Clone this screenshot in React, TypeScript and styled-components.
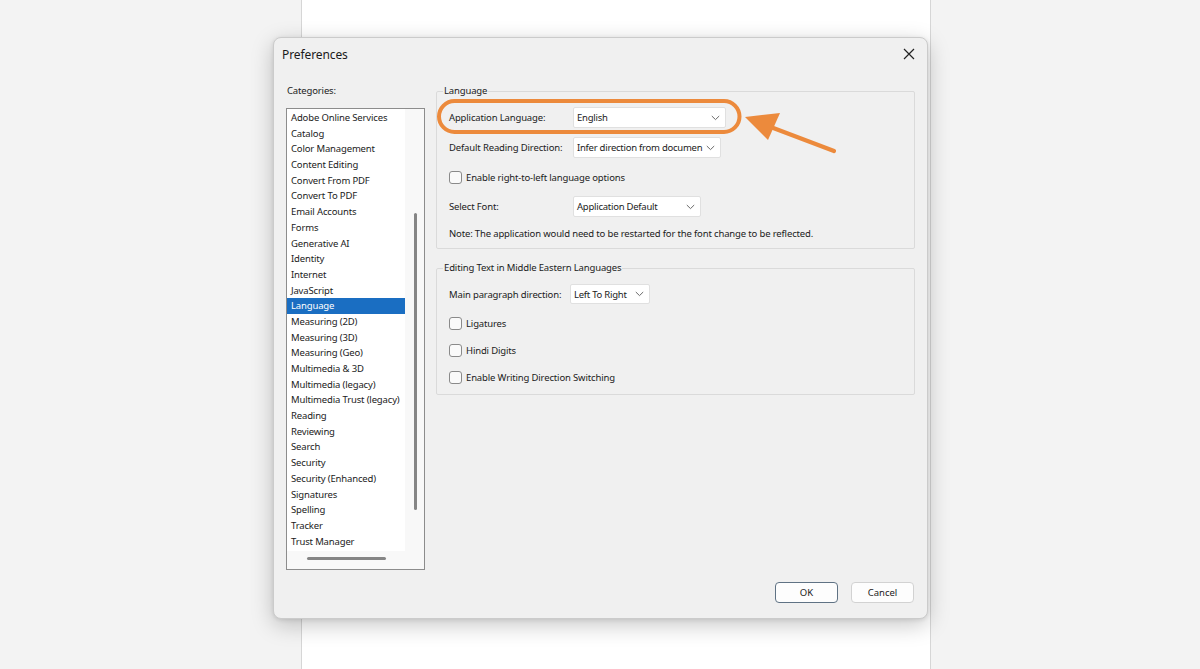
import styled, { createGlobalStyle } from 'styled-components'

const GlobalStyle = createGlobalStyle`
  html, body {
    margin: 0;
    padding: 0;
    background: #f3f3f3;
    font-family: "Noto Sans", "Liberation Sans", sans-serif;
    color: #1b1b1b;
  }
`

const Screen = styled.div`
  position: relative;
  width: 1200px;
  height: 669px;
  overflow: hidden;
  background: #f3f3f3;
`

const PageSheet = styled.div`
  margin-left: 301px;
  width: 628px;
  height: 100%;
  background: #ffffff;
  border-left: 1px solid #d6d6d6;
  border-right: 1px solid #d6d6d6;
`

const Dialog = styled.div`
  position: absolute;
  top: 37px;
  left: 273px;
  width: 655px;
  height: 582px;
  box-sizing: border-box;
  background: #f0f0f0;
  border: 1px solid #cbcbcb;
  border-radius: 8px;
  box-shadow: 0 6px 22px rgba(0, 0, 0, 0.22), 0 1px 4px rgba(0, 0, 0, 0.1);
  display: flex;
  flex-direction: column;
`

const TitleBar = styled.div`
  height: 32px;
  display: flex;
  align-items: center;
  justify-content: space-between;
  padding: 0 8px 0 8px;
`

const Title = styled.span`
  font-size: 12px;
  letter-spacing: -0.1px;
`

const CloseButton = styled.button`
  width: 20px;
  height: 20px;
  padding: 0;
  border: none;
  background: transparent;
  display: flex;
  align-items: center;
  justify-content: center;
`

const Body = styled.div`
  display: flex;
  gap: 11px;
  padding: 14px 12px 0 12px;
  flex: 1;
`

const LeftColumn = styled.div`
  width: 139px;
  display: flex;
  flex-direction: column;
`

const SmallLabel = styled.div`
  font-size: 9.5px;
  letter-spacing: -0.15px;
  line-height: 14px;
  height: 14px;
  margin-bottom: 10px;
  padding-left: 1px;
`

const ListBox = styled.div`
  height: 462px;
  box-sizing: border-box;
  border: 1px solid #8c8c8c;
  display: grid;
  grid-template-columns: 1fr 19px;
  grid-template-rows: 1fr 18px;
  background: #f8f8f8;
`

const Items = styled.div`
  background: #ffffff;
  padding-top: 1px;
  overflow: hidden;
`

const Item = styled.div<{ $selected?: boolean }>`
  font-size: 9.5px;
  letter-spacing: -0.15px;
  line-height: 15.7px;
  height: 15.7px;
  padding-left: 4px;
  white-space: nowrap;
  background: ${(p) => (p.$selected ? '#1a6ec2' : 'transparent')};
  color: ${(p) => (p.$selected ? '#ffffff' : '#1b1b1b')};
`

const VTrack = styled.div`
  background: #f8f8f8;
  display: flex;
  justify-content: center;
`

const VThumb = styled.div`
  width: 3px;
  height: 297px;
  margin-top: 104px;
  margin-left: 1px;
  border-radius: 2px;
  background: #858585;
`

const HTrack = styled.div`
  background: #f8f8f8;
  display: flex;
  align-items: center;
`

const HThumb = styled.div`
  width: 79px;
  height: 3px;
  margin-left: 20px;
  margin-top: -3px;
  border-radius: 2px;
  background: #858585;
`

const RightColumn = styled.div`
  flex: 1;
  display: flex;
  flex-direction: column;
`

const Group = styled.fieldset<{ $gap: number; $bottom: number }>`
  margin: 0;
  padding: 9px 0 ${(p) => p.$bottom}px 12px;
  border: 1px solid #dadada;
  border-radius: 2px;
  display: flex;
  flex-direction: column;
  gap: ${(p) => p.$gap}px;
  & + & {
    margin-top: 12px;
  }
`

const Legend = styled.legend`
  font-size: 9.5px;
  letter-spacing: -0.15px;
  line-height: 14px;
  padding: 0 1px;
  margin-left: -6px;
`

const Row = styled.div<{ $h?: number; $after?: number }>`
  display: flex;
  align-items: center;
  height: ${(p) => p.$h ?? 20}px;
  margin-bottom: ${(p) => p.$after ?? 0}px;
  font-size: 9.5px;
  letter-spacing: -0.15px;
  white-space: nowrap;
`

const FieldLabel = styled.span<{ $w: number }>`
  width: ${(p) => p.$w}px;
  flex-shrink: 0;
`

const Select = styled.div<{ $w: number }>`
  width: ${(p) => p.$w}px;
  height: 100%;
  box-sizing: border-box;
  background: #ffffff;
  border: 1px solid #e0e0e0;
  border-radius: 2px;
  display: flex;
  align-items: center;
  justify-content: space-between;
  gap: 3px;
  padding: 0 5px 0 3px;
`

const SelectText = styled.span`
  white-space: nowrap;
  letter-spacing: -0.25px;
`

const Check = styled.span`
  width: 13px;
  height: 13px;
  box-sizing: border-box;
  border: 1px solid #8a8a8a;
  border-radius: 3px;
  background: #fafafa;
  margin-right: 4px;
  flex-shrink: 0;
`

const Note = styled.div`
  font-size: 9.5px;
  letter-spacing: -0.15px;
  line-height: 16px;
  height: 16px;
  white-space: nowrap;
`

const Footer = styled.div`
  display: flex;
  justify-content: flex-end;
  gap: 13px;
  padding: 0 13px 15px 0;
`

const Button = styled.button<{ $primary?: boolean }>`
  width: 63px;
  height: 21px;
  box-sizing: border-box;
  font-family: inherit;
  font-size: 9.5px;
  color: #1b1b1b;
  background: #fdfdfd;
  border: 1px solid ${(p) => (p.$primary ? '#5f7284' : '#d2d2d2')};
  border-radius: 4px;
  padding: 0;
`

const Annotation = styled.svg`
  position: absolute;
  left: 0;
  top: 0;
  pointer-events: none;
`

const categories = [
  'Adobe Online Services',
  'Catalog',
  'Color Management',
  'Content Editing',
  'Convert From PDF',
  'Convert To PDF',
  'Email Accounts',
  'Forms',
  'Generative AI',
  'Identity',
  'Internet',
  'JavaScript',
  'Language',
  'Measuring (2D)',
  'Measuring (3D)',
  'Measuring (Geo)',
  'Multimedia & 3D',
  'Multimedia (legacy)',
  'Multimedia Trust (legacy)',
  'Reading',
  'Reviewing',
  'Search',
  'Security',
  'Security (Enhanced)',
  'Signatures',
  'Spelling',
  'Tracker',
  'Trust Manager',
]

function Chevron() {
  return (
    <svg width="9" height="6" viewBox="0 0 9 6" style={{ flexShrink: 0 }}>
      <polyline points="0.8,1 4.5,4.6 8.2,1" fill="none" stroke="#6a6a6a" strokeWidth="1" />
    </svg>
  )
}

function Dropdown({ width, value }: { width: number; value: string }) {
  return (
    <Select $w={width}>
      <SelectText>{value}</SelectText>
      <Chevron />
    </Select>
  )
}

function App() {
  return (
    <>
      <GlobalStyle />
      <Screen>
        <PageSheet />

        <Dialog>
          <TitleBar>
            <Title>Preferences</Title>
            <CloseButton aria-label="Close">
              <svg width="12" height="12" viewBox="0 0 12 12">
                <path d="M1 1 L11 11 M11 1 L1 11" stroke="#222" strokeWidth="1.2" />
              </svg>
            </CloseButton>
          </TitleBar>

          <Body>
            <LeftColumn>
              <SmallLabel>Categories:</SmallLabel>
              <ListBox>
                <Items>
                  {categories.map((c) => (
                    <Item key={c} $selected={c === 'Language'}>
                      {c}
                    </Item>
                  ))}
                </Items>
                <VTrack>
                  <VThumb />
                </VTrack>
                <HTrack>
                  <HThumb />
                </HTrack>
              </ListBox>
            </LeftColumn>

            <RightColumn>
              <Group $gap={9} $bottom={6}>
                <Legend>Language</Legend>
                <Row $h={21}>
                  <FieldLabel $w={124}>Application Language:</FieldLabel>
                  <Dropdown width={153} value="English" />
                </Row>
                <Row $h={21}>
                  <FieldLabel $w={124}>Default Reading Direction:</FieldLabel>
                  <Dropdown width={148} value="Infer direction from documen" />
                </Row>
                <Row>
                  <Check />
                  Enable right-to-left language options
                </Row>
                <Row $h={21}>
                  <FieldLabel $w={124}>Select Font:</FieldLabel>
                  <Dropdown width={128} value="Application Default" />
                </Row>
                <Note>Note: The application would need to be restarted for the font change to be reflected.</Note>
              </Group>

              <Group $gap={7} $bottom={7}>
                <Legend>Editing Text in Middle Eastern Languages</Legend>
                <Row $after={2}>
                  <FieldLabel $w={121}>Main paragraph direction:</FieldLabel>
                  <Dropdown width={80} value="Left To Right" />
                </Row>
                <Row>
                  <Check />
                  Ligatures
                </Row>
                <Row>
                  <Check />
                  Hindi Digits
                </Row>
                <Row>
                  <Check />
                  Enable Writing Direction Switching
                </Row>
              </Group>
            </RightColumn>
          </Body>

          <Footer>
            <Button $primary>OK</Button>
            <Button>Cancel</Button>
          </Footer>
        </Dialog>

        <Annotation width="1200" height="669" viewBox="0 0 1200 669">
          <rect x="439" y="101" width="300.5" height="31" rx="15.5" fill="none" stroke="#ec8a3c" strokeWidth="4" />
          <line x1="834" y1="151" x2="768" y2="126" stroke="#ec8a3c" strokeWidth="4.2" strokeLinecap="round" />
          <polygon points="745,117 780,113 768,140" fill="#ec8a3c" />
        </Annotation>
      </Screen>
    </>
  )
}

export default App
